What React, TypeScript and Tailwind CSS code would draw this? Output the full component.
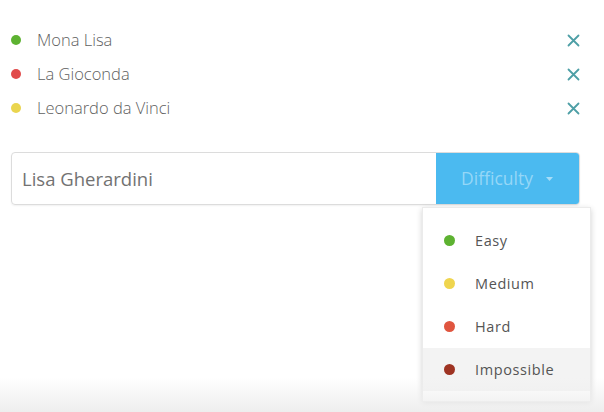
import React from 'react';

interface Tag {
  label: string;
  color: string;
}

const tags: Tag[] = [
  { label: 'Mona Lisa', color: 'bg-[#5db231]' },
  { label: 'La Gioconda', color: 'bg-[#e14b4b]' },
  { label: 'Leonardo da Vinci', color: 'bg-[#ead54f]' },
];

const levels: Tag[] = [
  { label: 'Easy', color: 'bg-[#5db231]' },
  { label: 'Medium', color: 'bg-[#efd54e]' },
  { label: 'Hard', color: 'bg-[#e0553f]' },
  { label: 'Impossible', color: 'bg-[#9e3322]' },
];

function CloseIcon() {
  return (
    <svg width="13" height="13" viewBox="0 0 13 13" fill="none">
      <path d="M1.5 1.5 L11.5 11.5 M11.5 1.5 L1.5 11.5" stroke="#4e9fa6" strokeWidth="1.8" strokeLinecap="round" />
    </svg>
  );
}

export default function App() {
  return (
    <div
      className="relative h-[412px] w-[604px] overflow-hidden bg-white"
      style={{ fontFamily: '"Open Sans", "Noto Sans", sans-serif' }}
    >
      {/* Tag list */}
      <div className="flex flex-col pl-[11px] pr-[24px] pt-[23px]">
        {tags.map((t) => (
          <div key={t.label} className="flex h-[34px] items-center">
            <span className={`h-[10px] w-[10px] rounded-full ${t.color}`} />
            <span className="ml-[16px] flex-1 text-[16.5px] font-light text-[#5f5f5f]">{t.label}</span>
            <CloseIcon />
          </div>
        ))}
      </div>

      {/* Input + dropdown */}
      <div className="relative ml-[11px] mt-[27px] w-[569px]">
        <div className="flex h-[53px] overflow-hidden rounded-[4px] border border-[#dcdcdc] shadow-[0_1px_2px_rgba(0,0,0,0.06)]">
          <div className="flex flex-1 items-center pl-[10px] text-[18.5px] text-[#727272]">Lisa Gherardini</div>
          <div className="flex w-[143px] items-center justify-center gap-[12px] bg-[#4bbaf0] text-[17.5px] text-[#95d7f7]">
            <span>Difficulty</span>
            <svg width="9" height="6" viewBox="0 0 9 6">
              <path d="M1 1 L4.5 5 L8 1 Z" fill="#a6ddf8" />
            </svg>
          </div>
        </div>

        {/* Dropdown menu */}
        <div className="absolute left-[411px] top-[55px] w-[169px] border border-[#ebebeb] bg-white pb-[10px] pt-[11px] shadow-[0_2px_6px_rgba(0,0,0,0.18)]">
          {levels.map((l) => (
            <div
              key={l.label}
              className={`flex h-[43px] items-center pl-[21px] ${l.label === 'Impossible' ? 'bg-[#f3f3f3]' : ''}`}
            >
              <span className={`h-[11px] w-[11px] rounded-full ${l.color}`} />
              <span className="ml-[20px] text-[14.5px] tracking-[0.6px] text-[#555555]">{l.label}</span>
            </div>
          ))}
        </div>
      </div>

      {/* Soft bottom fade */}
      <div className="pointer-events-none absolute bottom-0 left-0 h-[34px] w-full bg-gradient-to-b from-white/0 to-[#eeeeee]" />
    </div>
  );
}
